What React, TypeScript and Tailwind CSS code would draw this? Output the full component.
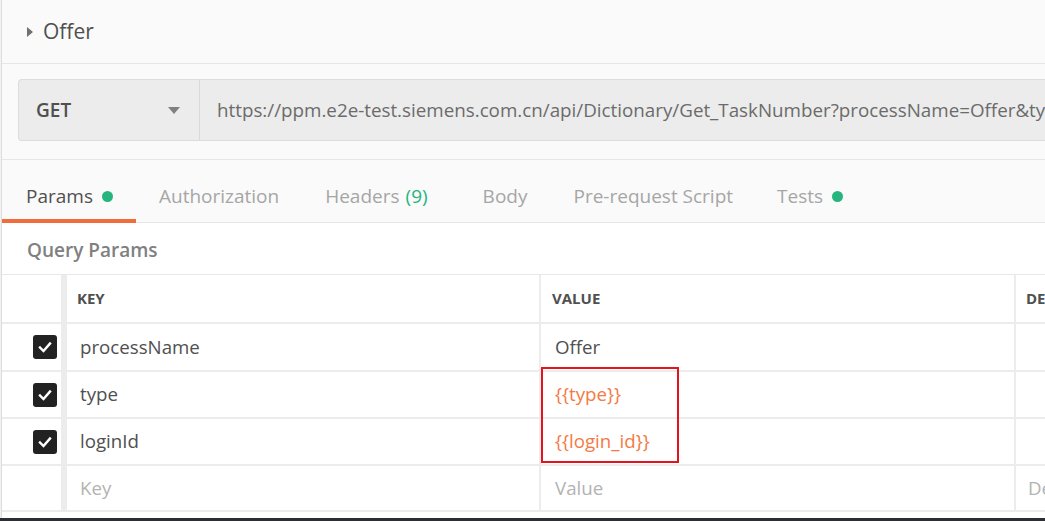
import React from "react";

const Check = () => (
  <div className="w-[24px] h-[24px] rounded-[3px] bg-[#222222] flex items-center justify-center">
    <svg width="16" height="16" viewBox="0 0 16 16">
      <path d="M3 8.5 L6.5 12 L13 4.5" stroke="#ffffff" strokeWidth="2.4" fill="none" strokeLinecap="square" />
    </svg>
  </div>
);

type Row = { key: string; value: string; orange?: boolean; checked: boolean; placeholder?: boolean; h: string };

const rows: Row[] = [
  { key: "processName", value: "Offer", checked: true, h: "h-[48px]" },
  { key: "type", value: "{{type}}", orange: true, checked: true, h: "h-[47px]" },
  { key: "loginId", value: "{{login_id}}", orange: true, checked: true, h: "h-[47px]" },
  { key: "Key", value: "Value", checked: false, placeholder: true, h: "h-[46px]" },
];

export default function App() {
  return (
    <div
      className="w-[1045px] h-[521px] overflow-hidden bg-[#fafafa] flex flex-col relative"
      style={{ fontFamily: '"Open Sans", "Noto Sans", sans-serif' }}
    >
      <div className="flex-1 flex min-h-0">
        <div className="w-[2px] bg-[#f2f2f2] border-r border-[#dcdcdc] shrink-0" />
        <div className="flex-1 flex flex-col min-w-0">
          {/* title */}
          <div className="h-[64px] border-b border-[#e6e6e6] flex items-center pl-[25px] text-[#505050]">
            <svg width="7" height="10" viewBox="0 0 7 10" className="mr-[9px]">
              <path d="M0 0 L6 5 L0 10 Z" fill="#707070" />
            </svg>
            <span className="text-[21px]">Offer</span>
          </div>
          {/* url bar */}
          <div className="h-[96px] border-b border-[#e6e6e6] pt-[15px] pl-[16px]">
            <div className="flex h-[62px] bg-[#ececec] border border-[#dcdcdc] rounded-l-[4px] border-r-0">
              <div className="w-[181px] shrink-0 border-r border-[#d9d9d9] flex items-center justify-between pl-[17px] pr-[19px]">
                <span className="text-[19px] font-semibold text-[#505050]">GET</span>
                <svg width="12" height="7" viewBox="0 0 12 7">
                  <path d="M0 0 L12 0 L6 7 Z" fill="#808080" />
                </svg>
              </div>
              <div className="flex items-center pl-[17px] text-[18.8px] text-[#6b6b6b] whitespace-nowrap overflow-hidden">
                https://ppm.e2e-test.siemens.com.cn/api/Dictionary/Get_TaskNumber?processName=Offer&amp;type=&#123;&#123;type&#125;&#125;
              </div>
            </div>
          </div>
          {/* tabs */}
          <div className="h-[63px] border-b border-[#e6e6e6] flex text-[19px] text-[#a6a6a6]">
            <div className="relative flex items-center pt-[11px] pl-[24px] pr-[23px] text-[#505050]">
              Params
              <span className="ml-[9px] w-[11px] h-[11px] rounded-full bg-[#26b47f]" />
              <div className="absolute left-0 right-0 bottom-[-1px] h-[4px] bg-[#f26b3a]" />
            </div>
            <div className="flex items-center pt-[11px] pl-[23px] pr-[22px]">Authorization</div>
            <div className="flex items-center pt-[11px] pl-[24px] pr-[28px]">
              Headers <span className="ml-[6px] text-[#26b47f]">(9)</span>
            </div>
            <div className="flex items-center pt-[11px] pl-[27px] pr-[23px]">Body</div>
            <div className="flex items-center pt-[11px] pl-[23px] pr-[22px]">Pre-request Script</div>
            <div className="flex items-center pt-[11px] pl-[22px] pr-[24px]">
              Tests
              <span className="ml-[9px] w-[11px] h-[11px] rounded-full bg-[#26b47f]" />
            </div>
          </div>
          {/* content */}
          <div className="flex-1 bg-white flex flex-col">
            <div className="h-[51px] flex items-center pt-[3px] pl-[25px] text-[19px] font-semibold text-[#808080]">
              Query Params
            </div>
            <div className="border-t border-[#e8e8e8]">
              {/* header */}
              <div className="flex h-[49px] border-b-2 border-[#ececec]">
                <div className="w-[65px] shrink-0 border-r-[6px] border-[#ececec]" />
                <div className="w-[474px] shrink-0 border-r-2 border-[#ececec] flex items-center pl-[10px] text-[15px] font-bold text-[#505050]">
                  KEY
                </div>
                <div className="w-[475px] shrink-0 border-r-2 border-[#ececec] flex items-center pl-[11px] text-[15px] font-bold text-[#505050]">
                  VALUE
                </div>
                <div className="flex-1 flex items-center pl-[10px] text-[15px] font-bold text-[#505050] whitespace-nowrap">
                  DESCRIPTION
                </div>
              </div>
              {rows.map((r, i) => (
                <div key={i} className={`flex ${r.h} border-b-2 border-[#ececec]`}>
                  <div className="w-[65px] shrink-0 border-r-[6px] border-[#ececec] flex items-center justify-end pr-[4px]">
                    {r.checked && <Check />}
                  </div>
                  <div
                    className={`w-[474px] shrink-0 border-r-2 border-[#ececec] flex items-center pl-[13px] text-[18.7px] ${
                      r.placeholder ? "text-[#b3b3b3]" : "text-[#505050]"
                    }`}
                  >
                    {r.key}
                  </div>
                  <div
                    className={`w-[475px] shrink-0 border-r-2 border-[#ececec] flex items-center pl-[14px] text-[18.7px] ${
                      r.placeholder ? "text-[#b3b3b3]" : r.orange ? "text-[#f47a45]" : "text-[#505050]"
                    }`}
                  >
                    {r.value}
                  </div>
                  <div className="flex-1 flex items-center pl-[12px] text-[18.7px] text-[#b3b3b3] whitespace-nowrap">
                    {r.placeholder ? "Description" : ""}
                  </div>
                </div>
              ))}
            </div>
          </div>
        </div>
      </div>
      <div className="h-[3px] bg-[#2b2e33] shrink-0" />
      <div className="absolute left-[541px] top-[367px] w-[138px] h-[96px] border-2 border-[#e4141f]" />
    </div>
  );
}
